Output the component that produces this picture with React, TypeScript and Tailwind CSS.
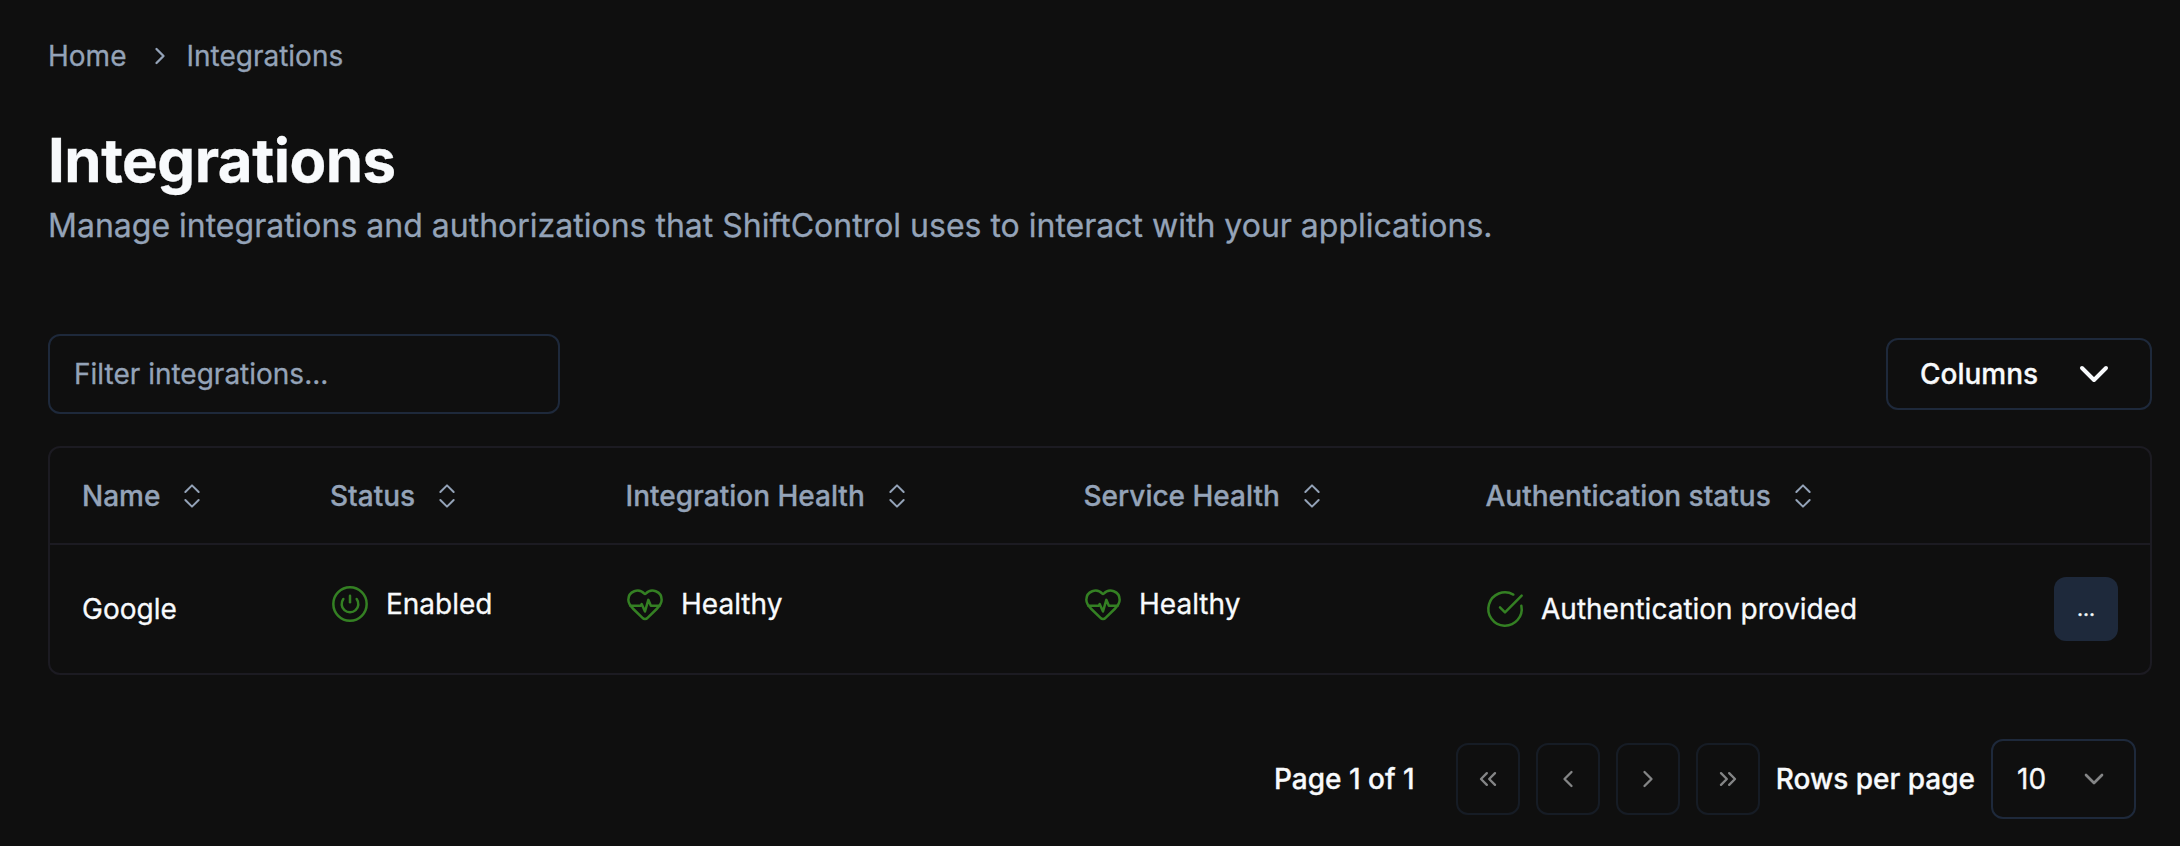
import React from "react";
import {
  ChevronDown,
  ChevronLeft,
  ChevronRight,
  ChevronsLeft,
  ChevronsRight,
  ChevronsUpDown,
  CircleCheckBig,
  CirclePower,
  HeartPulse,
} from "lucide-react";

function HeaderCell({ label, className }: { label: string; className: string }) {
  return (
    <div className={`flex shrink-0 items-center font-medium text-[#94a3b8] ${className}`}>
      <span>{label}</span>
      <ChevronsUpDown className="ml-4 size-8" strokeWidth={1.5} />
    </div>
  );
}

function PageButton({ children }: { children: React.ReactNode }) {
  return (
    <button className="flex h-18 w-16 items-center justify-center rounded-xl border-2 border-[#1e293b] text-[#f8fafc] opacity-50">
      {children}
    </button>
  );
}

export default function App() {
  return (
    <div className="flex h-[846px] w-[2180px] flex-col bg-[#0f0f0f] pr-7 pl-12 font-['Inter',sans-serif] text-[28px] leading-10 text-[#f8fafc] [-webkit-text-stroke:0.3px]">
      <nav className="mt-9 flex items-center text-[#94a3b8]">
        <span>Home</span>
        <ChevronRight className="mr-3 ml-5 size-7" strokeWidth={2} />
        <span>Integrations</span>
      </nav>

      <header className="mt-12 flex flex-col">
        <h1 className="text-[60px] leading-[72px] font-bold tracking-[-0.5px]">Integrations</h1>
        <p className="mt-1.5 text-[32px] leading-[48px] text-[#94a3b8]">
          Manage integrations and authorizations that ShiftControl uses to interact with your applications.
        </p>
      </header>

      <div className="mt-[84px] flex items-center justify-between">
        <input
          className="h-20 w-[512px] rounded-xl border-2 border-[#1e293b] bg-transparent px-6 outline-none placeholder:text-[#94a3b8]"
          placeholder="Filter integrations..."
        />
        <button className="flex h-18 w-[266px] items-center justify-between rounded-xl border-2 border-[#1e293b] px-8 font-medium">
          <span>Columns</span>
          <ChevronDown className="size-12" />
        </button>
      </div>

      <div className="mt-8 flex h-[229px] flex-col rounded-xl border-2 border-[#1c1b22]">
        <div className="flex h-[97px] shrink-0 items-center border-b-2 border-[#1c1b22] pl-8">
          <HeaderCell label="Name" className="w-[248px]" />
          <HeaderCell label="Status" className="w-[295.5px]" />
          <HeaderCell label="Integration Health" className="w-[458px]" />
          <HeaderCell label="Service Health" className="w-[402px]" />
          <HeaderCell label="Authentication status" className="w-[440px]" />
        </div>
        <div className="flex h-32 items-center px-8">
          <div className="w-[248px] shrink-0">Google</div>
          <div className="flex w-[295px] shrink-0 items-center gap-4 pb-[10px]">
            <CirclePower className="size-10 text-[#348023]" strokeWidth={1.5} />
            Enabled
          </div>
          <div className="flex w-[458px] shrink-0 items-center gap-4 pb-[10px]">
            <HeartPulse className="size-10 text-[#348023]" strokeWidth={1.5} />
            Healthy
          </div>
          <div className="flex w-[402px] shrink-0 items-center gap-4 pb-[10px]">
            <HeartPulse className="size-10 text-[#348023]" strokeWidth={1.5} />
            Healthy
          </div>
          <div className="flex shrink-0 items-center gap-4">
            <CircleCheckBig className="size-10 text-[#348023]" strokeWidth={1.5} />
            Authentication provided
          </div>
          <button className="ml-auto size-16 rounded-xl bg-[#1e293b] text-[20px] font-medium">...</button>
        </div>
      </div>

      <div className="mt-16 flex items-center justify-end pr-4 font-medium">
        <span className="mr-[41px]">Page 1 of 1</span>
        <div className="flex gap-4">
          <PageButton>
            <ChevronsLeft className="size-7" />
          </PageButton>
          <PageButton>
            <ChevronLeft className="size-7" />
          </PageButton>
          <PageButton>
            <ChevronRight className="size-7" />
          </PageButton>
          <PageButton>
            <ChevronsRight className="size-7" />
          </PageButton>
        </div>
        <span className="ml-4">Rows per page</span>
        <button className="ml-4 flex h-20 w-[145px] items-center justify-between rounded-xl border-2 border-[#1e293b] px-6 font-normal">
          <span>10</span>
          <ChevronDown className="size-8 opacity-50" />
        </button>
      </div>
    </div>
  );
}
